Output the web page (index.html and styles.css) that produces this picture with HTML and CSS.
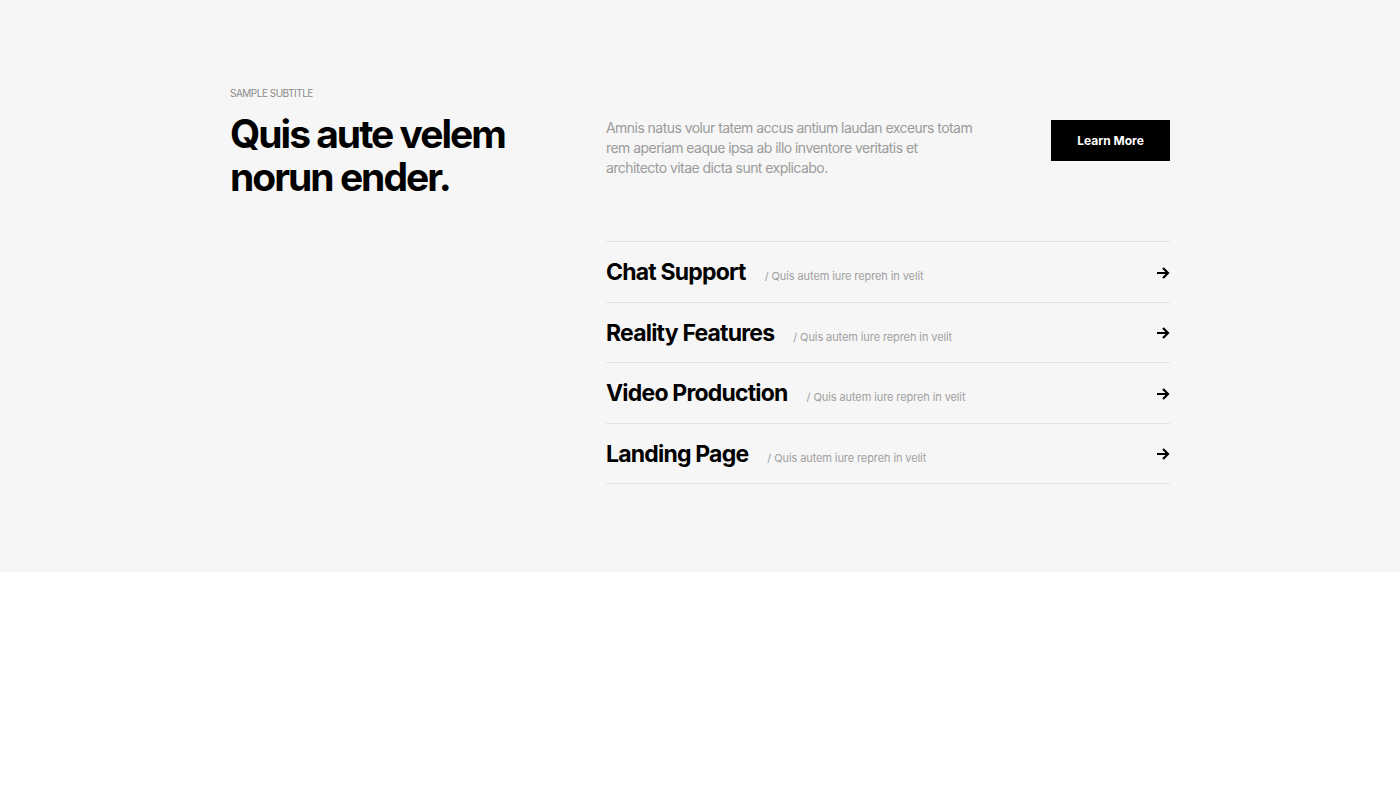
FILE: index.html
```html
<!DOCTYPE html>
<html>
<head>
<meta charset="utf-8">
<link rel="stylesheet" href="styles.css">
</head>
<body>
<section class="services">
  <div class="container">
    <div class="left">
      <div class="subtitle">SAMPLE SUBTITLE</div>
      <h2 class="heading"><span class="line">Quis aute velem</span><span class="line">norun ender.</span></h2>
    </div>
    <div class="right">
      <div class="intro">
        <p class="intro-text">Amnis natus volur tatem accus antium laudan exceurs totam rem aperiam eaque ipsa ab illo inventore veritatis et architecto vitae dicta sunt explicabo.</p>
        <a class="btn" href="#">Learn More</a>
      </div>
      <ul class="list">
        <li class="item"><span class="item-title">Chat Support</span><span class="item-sub">/ Quis autem iure repreh in velit</span><svg class="arrow" viewBox="0 0 14 14" width="14" height="14"><path d="M1 7h11M7 2l5 5-5 5" fill="none" stroke="#000" stroke-width="2.2"/></svg></li>
        <li class="item"><span class="item-title">Reality Features</span><span class="item-sub">/ Quis autem iure repreh in velit</span><svg class="arrow" viewBox="0 0 14 14" width="14" height="14"><path d="M1 7h11M7 2l5 5-5 5" fill="none" stroke="#000" stroke-width="2.2"/></svg></li>
        <li class="item"><span class="item-title">Video Production</span><span class="item-sub">/ Quis autem iure repreh in velit</span><svg class="arrow" viewBox="0 0 14 14" width="14" height="14"><path d="M1 7h11M7 2l5 5-5 5" fill="none" stroke="#000" stroke-width="2.2"/></svg></li>
        <li class="item"><span class="item-title">Landing Page</span><span class="item-sub">/ Quis autem iure repreh in velit</span><svg class="arrow" viewBox="0 0 14 14" width="14" height="14"><path d="M1 7h11M7 2l5 5-5 5" fill="none" stroke="#000" stroke-width="2.2"/></svg></li>
      </ul>
    </div>
  </div>
</section>
</body>
</html>
```
FILE: styles.css
```css
* { box-sizing: border-box; }
html, body { margin: 0; padding: 0; background: #fff; }
body { font-family: Inter, "Noto Sans", sans-serif; color: #000; }

.services {
  background: #f6f6f6;
  padding: 86px 0 88px;
}
.container {
  width: 940px;
  margin: 0 auto;
  display: grid;
  grid-template-columns: 376px 1fr;
}
.subtitle {
  font-size: 10px;
  line-height: 14px;
  color: #8a8a8a;
  letter-spacing: -0.5px;
}
.heading {
  margin: 12px 0 0;
  font-size: 39px;
  line-height: 43px;
  font-weight: 700;
  letter-spacing: -2px;
}
.line { display: block; }
.right { padding-top: 32px; }
.intro {
  display: flex;
  justify-content: space-between;
  align-items: flex-start;
}
.intro-text {
  margin: 0;
  width: 372px;
  font-size: 14px;
  line-height: 20px;
  color: #9b9b9b;
  letter-spacing: -0.55px;
}
.btn {
  margin-top: 2px;
  width: 119px;
  height: 41px;
  background: #000;
  color: #fff;
  font-size: 12px;
  font-weight: 700;
  text-decoration: none;
  display: flex;
  align-items: center;
  justify-content: center;
  letter-spacing: 0;
}
.list {
  list-style: none;
  margin: 63px 0 0;
  padding: 0;
  border-top: 1px solid #e2e2e2;
}
.item {
  display: flex;
  align-items: baseline;
  height: 60.5px;
  padding-top: 16px;
  border-bottom: 1px solid #e2e2e2;
}
.item-title {
  font-size: 23px;
  line-height: 28px;
  font-weight: 700;
  letter-spacing: -0.8px;
}
.item-sub {
  margin-left: 19px;
  font-size: 11px;
  color: #a0a0a0;
  letter-spacing: -0.1px;
}
.arrow {
  margin-left: auto;
  align-self: center;
  margin-top: -14px;
}
```
